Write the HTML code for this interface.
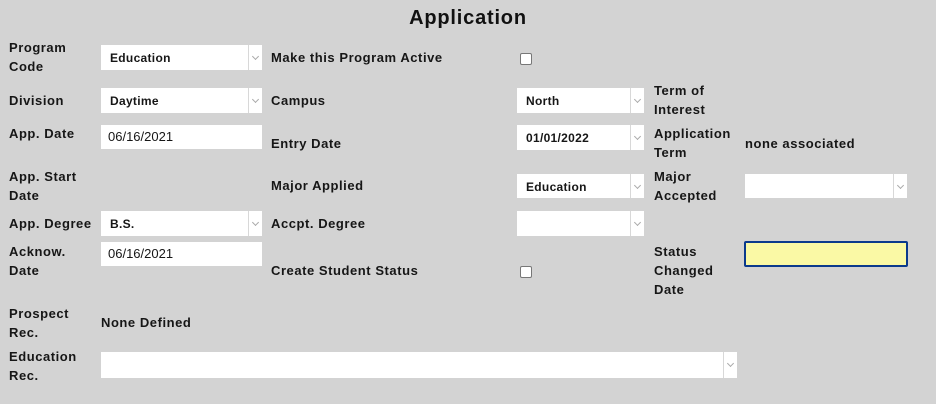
<!DOCTYPE html>
<html><head><style>
body{margin:0;width:936px;height:404px;background:#d3d3d3;font-family:"Liberation Sans",sans-serif;color:#161616;position:relative;overflow:hidden}
.t{position:absolute;font-weight:bold;font-size:13px;line-height:19px;white-space:nowrap;letter-spacing:0.55px}
h1{position:absolute;left:0;width:936px;top:7px;margin:0;text-align:center;font-size:20px;font-weight:bold;color:#111;letter-spacing:0.8px}
.s,.i{position:absolute;background:#fff;height:25px;box-sizing:border-box}
.s span{position:absolute;left:9px;top:6px;font-size:12px;font-weight:bold;letter-spacing:0.3px}
.s::after{content:"";position:absolute;right:0;top:0;width:14px;height:100%;border-left:1px solid #d8d8d8;box-sizing:border-box}
.s b{position:absolute;right:4px;top:9px;width:4px;height:4px;border-right:1px solid #aaa;border-bottom:1px solid #aaa;transform:rotate(45deg);z-index:1}
.i span{position:absolute;left:7px;top:4px;font-size:13px}
.c{position:absolute;width:10px;height:10px;border:1px solid #777;border-radius:2px;background:#fff}
</style></head><body>
<h1>Application</h1>
<div class="t" style="left:9px;top:38px">Program<br>Code</div>
<div class="t" style="left:9px;top:91px">Division</div>
<div class="t" style="left:9px;top:124px">App. Date</div>
<div class="t" style="left:9px;top:167px">App. Start<br>Date</div>
<div class="t" style="left:9px;top:214px">App. Degree</div>
<div class="t" style="left:9px;top:242px">Acknow.<br>Date</div>
<div class="t" style="left:9px;top:304px">Prospect<br>Rec.</div>
<div class="t" style="left:101px;top:313px">None Defined</div>
<div class="t" style="left:9px;top:347px">Education<br>Rec.</div>

<div class="s" style="left:101px;top:45px;width:161px"><span>Education</span><b></b></div>
<div class="s" style="left:101px;top:88px;width:161px"><span>Daytime</span><b></b></div>
<div class="i" style="left:101px;top:125px;width:161px;height:24px"><span>06/16/2021</span></div>
<div class="s" style="left:101px;top:211px;width:161px"><span>B.S.</span><b></b></div>
<div class="i" style="left:101px;top:242px;width:161px;height:24px"><span>06/16/2021</span></div>
<div class="s" style="left:101px;top:352px;width:636px;height:26px"><b></b></div>

<div class="t" style="left:271px;top:48px">Make this Program Active</div>
<div class="t" style="left:271px;top:91px">Campus</div>
<div class="t" style="left:271px;top:134px">Entry Date</div>
<div class="t" style="left:271px;top:176px">Major Applied</div>
<div class="t" style="left:271px;top:214px">Accpt. Degree</div>
<div class="t" style="left:271px;top:261px">Create Student Status</div>
<div class="c" style="left:520px;top:53px"></div>
<div class="c" style="left:520px;top:266px"></div>

<div class="s" style="left:517px;top:88px;width:127px"><span>North</span><b></b></div>
<div class="s" style="left:517px;top:125px;width:127px"><span>01/01/2022</span><b></b></div>
<div class="s" style="left:517px;top:174px;width:127px;height:24px"><span>Education</span><b></b></div>
<div class="s" style="left:517px;top:211px;width:127px"><b></b></div>

<div class="t" style="left:654px;top:81px">Term of<br>Interest</div>
<div class="t" style="left:654px;top:124px">Application<br>Term</div>
<div class="t" style="left:745px;top:134px">none associated</div>
<div class="t" style="left:654px;top:167px">Major<br>Accepted</div>
<div class="s" style="left:745px;top:174px;width:162px;height:24px"><b></b></div>
<div class="t" style="left:654px;top:242px">Status<br>Changed<br>Date</div>
<div style="position:absolute;left:744px;top:241px;width:164px;height:26px;box-sizing:border-box;border:2px solid #0b3a8c;background:#faf9a5;border-radius:2px"></div>
</body></html>
